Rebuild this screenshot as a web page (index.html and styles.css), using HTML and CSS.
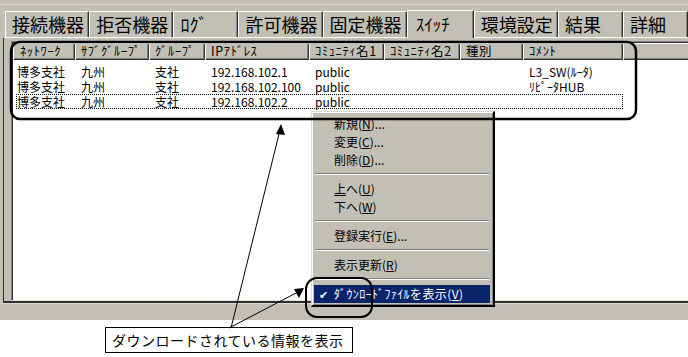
FILE: index.html
```html
<!DOCTYPE html>
<html lang="ja">
<head>
<meta charset="utf-8">
<link rel="stylesheet" href="styles.css">
</head>
<body>
<div class="app">
  <div class="window">
    <div class="topline"></div>
    <div class="tabs">
      <div class="tab">接続機器</div>
      <div class="tab">拒否機器</div>
      <div class="tab">ﾛｸﾞ</div>
      <div class="tab">許可機器</div>
      <div class="tab">固定機器</div>
      <div class="tab active">ｽｲｯﾁ</div>
      <div class="tab">環境設定</div>
      <div class="tab">結果</div>
      <div class="tab">詳細</div>
      <div class="tab-rest"></div>
    </div>
    <div class="panel">
      <div class="list">
        <div class="header">
          <div class="hc c1">ﾈｯﾄﾜｰｸ</div>
          <div class="hc c2">ｻﾌﾞｸﾞﾙｰﾌﾟ</div>
          <div class="hc c3">ｸﾞﾙｰﾌﾟ</div>
          <div class="hc c4">IPｱﾄﾞﾚｽ</div>
          <div class="hc c5">ｺﾐｭﾆﾃｨ名1</div>
          <div class="hc c6">ｺﾐｭﾆﾃｨ名2</div>
          <div class="hc c7">種別</div>
          <div class="hc c8">ｺﾒﾝﾄ</div>
          <div class="hc c9"></div>
        </div>
        <div class="rows">
          <div class="row">
            <div class="cell c1">博多支社</div>
            <div class="cell c2">九州</div>
            <div class="cell c3">支社</div>
            <div class="cell c4">192.168.102.1</div>
            <div class="cell c5">public</div>
            <div class="cell c6"></div>
            <div class="cell c7"></div>
            <div class="cell c8">L3_SW(ﾙｰﾀ)</div>
          </div>
          <div class="row">
            <div class="cell c1">博多支社</div>
            <div class="cell c2">九州</div>
            <div class="cell c3">支社</div>
            <div class="cell c4">192.168.102.100</div>
            <div class="cell c5">public</div>
            <div class="cell c6"></div>
            <div class="cell c7"></div>
            <div class="cell c8">ﾘﾋﾟｰﾀHUB</div>
          </div>
          <div class="row focus">
            <div class="cell c1">博多支社</div>
            <div class="cell c2">九州</div>
            <div class="cell c3">支社</div>
            <div class="cell c4">192.168.102.2</div>
            <div class="cell c5">public</div>
            <div class="cell c6"></div>
            <div class="cell c7"></div>
            <div class="cell c8"></div>
          </div>
        </div>
      </div>
    </div>
    <div class="statusbar"></div>
  </div>
  <div class="callout-area">
    <div class="callout">ダウンロードされている情報を表示</div>
  </div>

  <div class="menu">
    <div class="mi">新規(<u>N</u>)...</div>
    <div class="mi">変更(<u>C</u>)...</div>
    <div class="mi">削除(<u>D</u>)...</div>
    <div class="sep"></div>
    <div class="mi"><u>上</u>へ(<u>U</u>)</div>
    <div class="mi">下へ(<u>W</u>)</div>
    <div class="sep"></div>
    <div class="mi">登録実行(<u>E</u>)...</div>
    <div class="sep"></div>
    <div class="mi">表示更新(<u>R</u>)</div>
    <div class="sep"></div>
    <div class="mi hl"><span class="check">✔</span>ﾀﾞｳﾝﾛｰﾄﾞﾌｧｲﾙを表示(<u>V</u>)</div>
  </div>

  <svg class="annot" width="688" height="357" viewBox="0 0 688 357">
    <rect x="11" y="42" width="625" height="77" rx="9" ry="9" fill="none" stroke="#000" stroke-width="2.5"/>
    <rect x="306" y="278" width="66" height="39" rx="11" ry="11" fill="none" stroke="#000" stroke-width="2"/>
    <line x1="231" y1="328" x2="280" y2="130" stroke="#000" stroke-width="1"/>
    <polygon points="281,124 276,134 285,135" fill="#000"/>
    <line x1="229" y1="328" x2="298" y2="292" stroke="#000" stroke-width="1"/>
    <polygon points="304,288 294,289 299,298" fill="#000"/>
  </svg>
</div>
</body>
</html>
```

FILE: styles.css
```css
* { box-sizing: border-box; }
html, body { margin: 0; padding: 0; background: #fff; }
body {
  font-family: "Noto Sans CJK JP", "Liberation Sans", sans-serif;
  color: #000;
}
.app {
  position: relative;
  width: 688px;
  height: 357px;
  overflow: hidden;
  background: #fff;
}
.window {
  background: #c2bfb5;
  height: 320px;
  padding-top: 4px;
  overflow: hidden;
}
.topline {
  height: 1px;
  background: #dcd9d1;
  margin-bottom: 6px;
}
.tabs {
  display: flex;
  align-items: flex-end;
  height: 26px;
  padding-left: 5px;
  position: relative;
  z-index: 2;
}
.tab {
  height: 26px;
  min-width: 65px;
  padding: 0 5px 0 6px;
  font-size: 18px;
  line-height: 25px;
  border-top: 1px solid #fff;
  border-left: 1px solid #fff;
  border-right: 1px solid #303030;
  box-shadow: inset -1px 0 0 #808080;
  white-space: nowrap;
  background: #c2bfb5;
}
.tab.active {
  height: 28px;
  margin-bottom: -1px;
  line-height: 26px;
  font-size: 17px;
  padding-left: 8px;
  min-width: 67px;
}
.tab-rest { flex: 1; }
.panel {
  margin-left: 3px;
  width: 700px;
  border-top: 1px solid #fff;
  border-left: 1px solid #303030;
  border-bottom: 2px solid #303030;
  padding: 3px 0 0 7px;
  height: 266px;
  position: relative;
  z-index: 1;
}
.list {
  height: 260px;
  background: #fff;
  border-top: 1px solid #808080;
  border-left: 1px solid #808080;
  border-bottom: 1px solid #e4e1da;
  box-shadow: inset 1px 1px 0 #303030;
  padding: 1px 0 0 1px;
}
.header {
  display: flex;
  height: 17px;
}
.hc {
  background: #c2bfb5;
  font-size: 12.5px;
  letter-spacing: 0.6px;
  line-height: 16px;
  height: 17px;
  padding-left: 6px;
  white-space: nowrap;
  box-shadow: inset 1px 1px 0 #fff, inset -1px -1px 0 #303030, inset -2px -2px 0 #808080;
}
.hc.c1 { padding-left: 7px; }
.c1 { width: 62px; }
.c2 { width: 74px; }
.c3 { width: 56px; }
.c4 { width: 104px; }
.c5 { width: 75px; }
.c6 { width: 76px; }
.c7 { width: 63px; }
.c8 { width: 100px; }
.hc.c9 { flex: 1; }
.rows {
  padding: 4px 0 0 3px;
}
.row {
  display: flex;
  height: 15px;
  width: 607px;
}
.row.focus {
  outline: 1px dotted #000;
  outline-offset: -1px;
}
.cell {
  font-size: 12px;
  line-height: 15px;
  height: 15px;
  padding-left: 6px;
  white-space: nowrap;
}
.cell.c1 { width: 59px; padding-left: 1px; }
.statusbar {
  height: 17px;
  border-top: 1px solid #dcd9d1;
}
.callout-area {
  padding: 7px 0 0 105px;
}
.callout {
  display: inline-block;
  height: 26px;
  border: 1px solid #000;
  padding: 0 8px 0 6px;
  font-size: 14px;
  letter-spacing: 0.5px;
  line-height: 24px;
  background: #fff;
}
.menu {
  position: absolute;
  left: 311px;
  top: 111px;
  width: 184px;
  padding: 3px 3px 2px 2px;
  background: #c2bfb5;
  border-left: 1px solid #dcd9d1;
  border-top: 1px solid #dcd9d1;
  border-right: 2px solid #000;
  border-bottom: 2px solid #000;
  box-shadow: inset 1px 1px 0 #fff, inset -1px -1px 0 #808080;
  z-index: 5;
}
.mi {
  height: 18px;
  font-size: 12px;
  line-height: 18px;
  padding-left: 20px;
  white-space: nowrap;
  position: relative;
}
.mi u { text-decoration: underline; text-underline-offset: 1px; }
.mi.hl {
  background: #0a246a;
  color: #fff;
  letter-spacing: 0.4px;
}
.check {
  position: absolute;
  left: 5px;
  top: 0;
  font-size: 11px;
}
.sep {
  height: 11px;
  padding: 4px 1px 0 1px;
}
.sep::before {
  content: "";
  display: block;
  height: 1px;
  background: #808080;
  border-bottom: 1px solid #fff;
  box-sizing: content-box;
}
.annot {
  position: absolute;
  left: 0;
  top: 0;
  pointer-events: none;
  z-index: 10;
}
```
